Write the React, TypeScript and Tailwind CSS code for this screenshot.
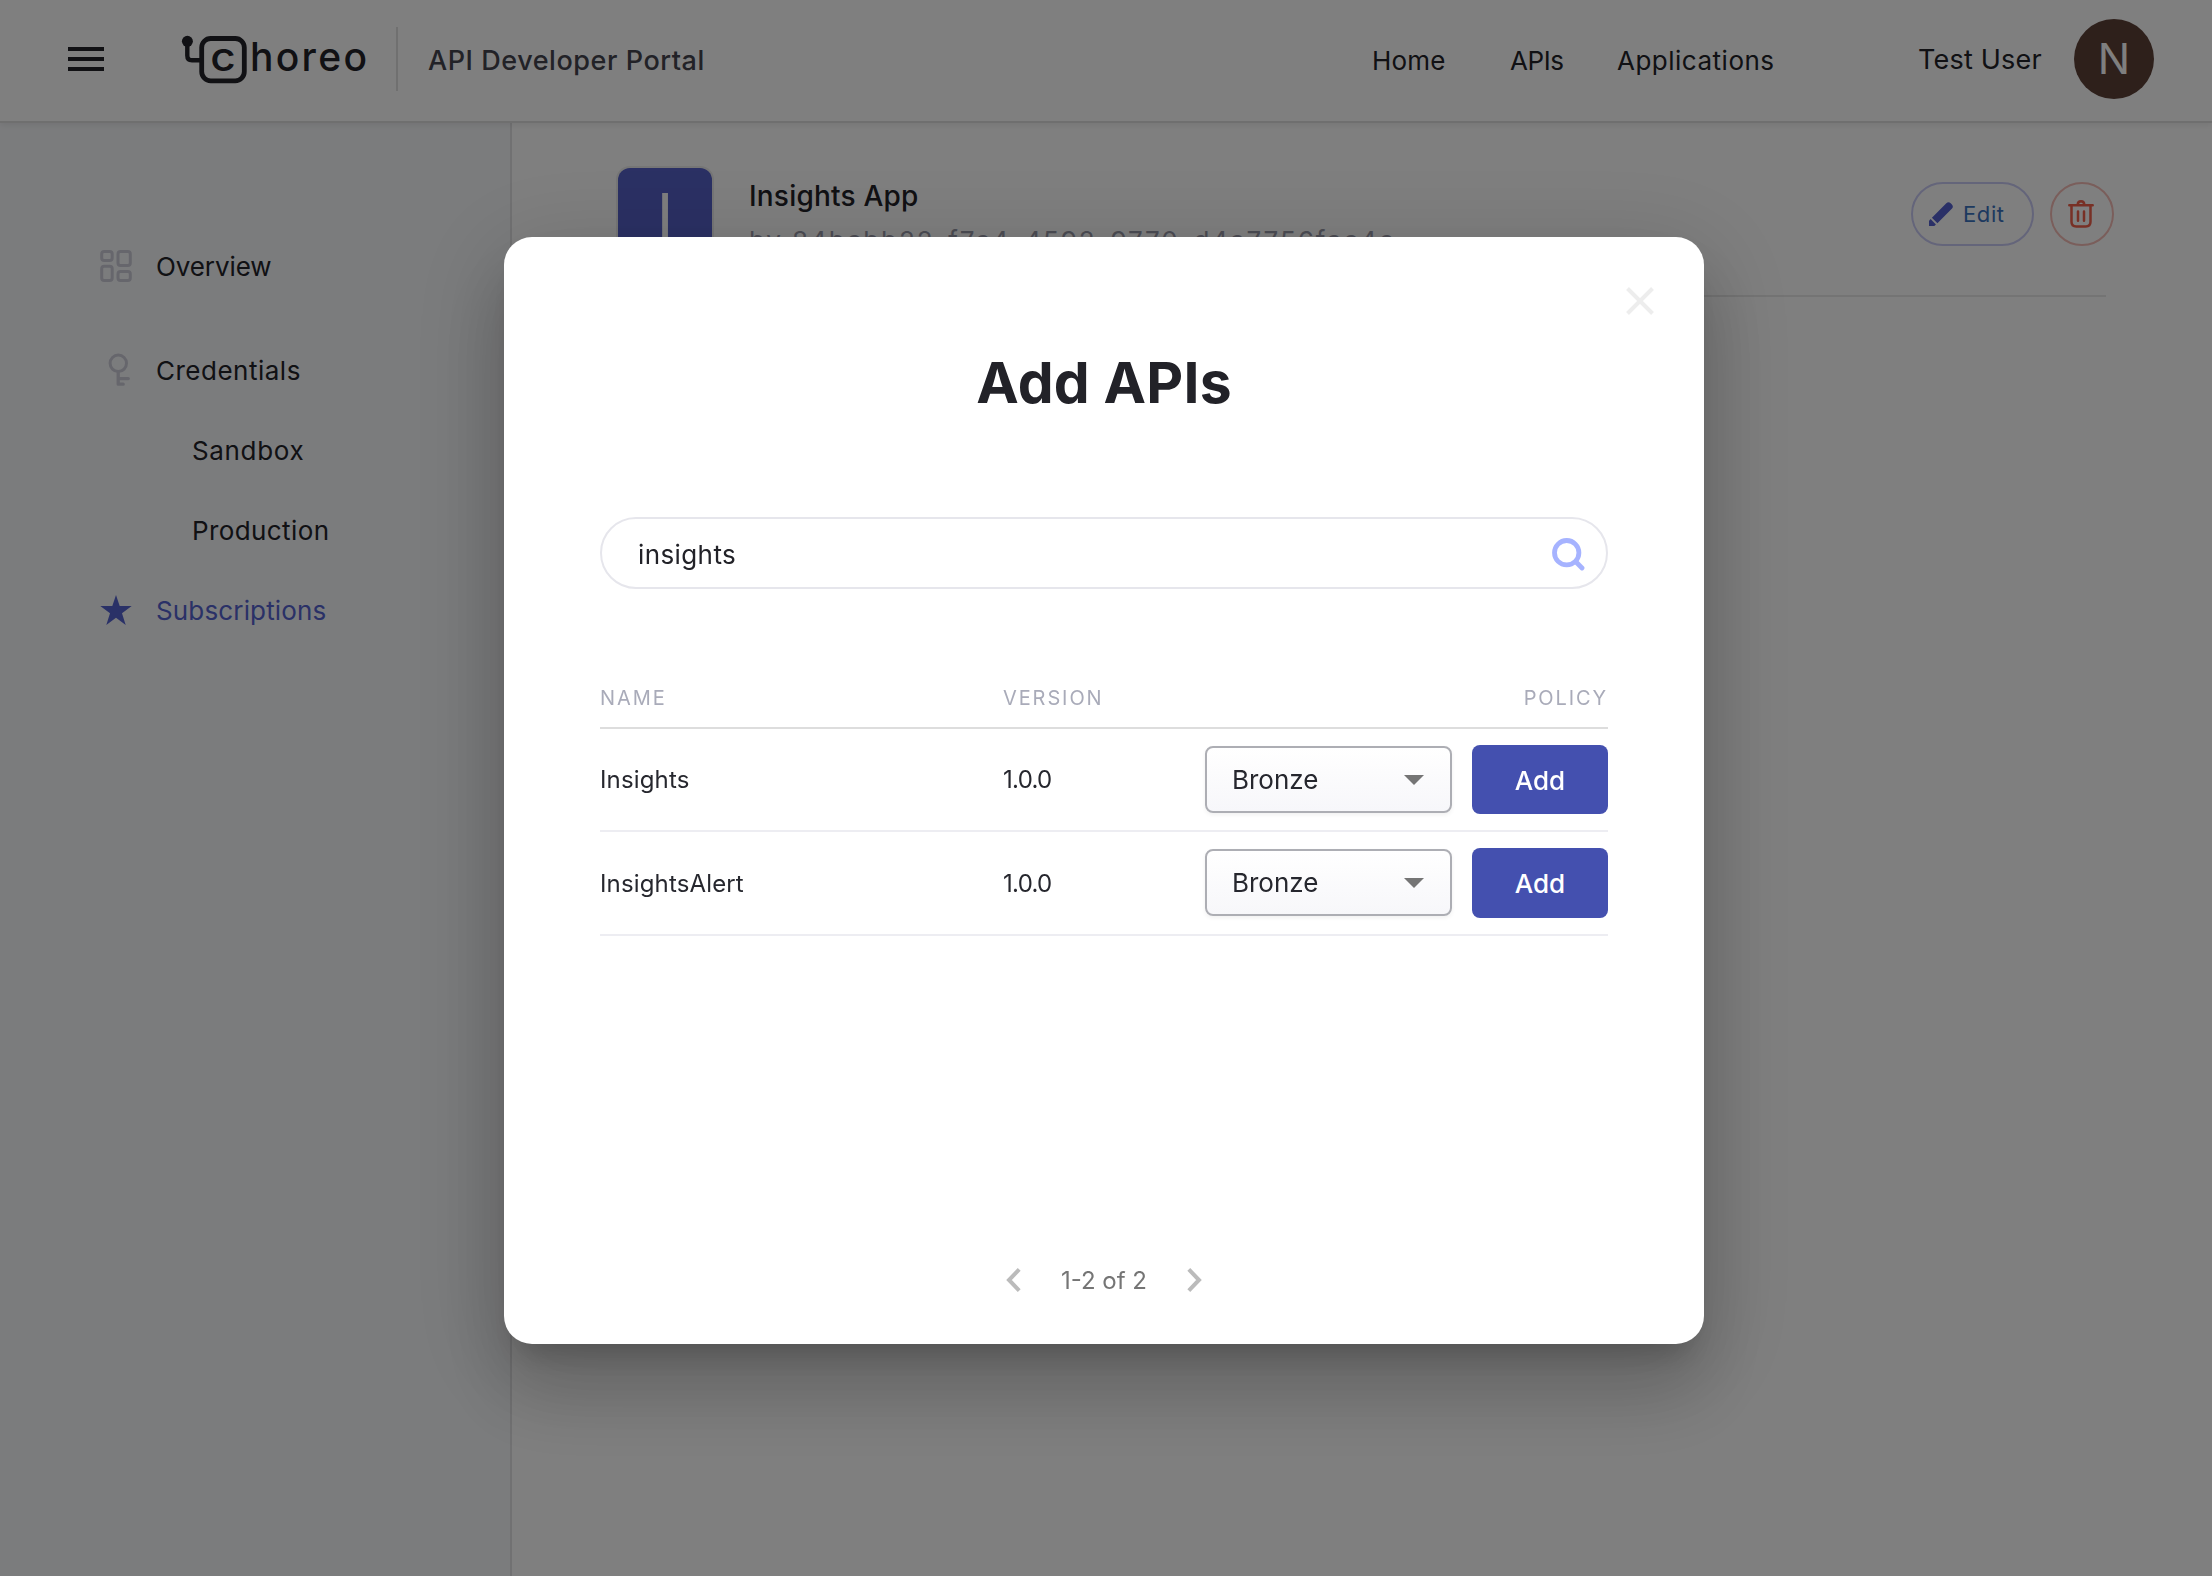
function MenuIcon() {
  return (
    <div className="flex w-9 flex-col gap-1.5">
      <div className="h-1 bg-[#222228]" />
      <div className="h-1 bg-[#222228]" />
      <div className="h-1 bg-[#222228]" />
    </div>
  );
}

function Logo() {
  return (
    <svg width="190" height="60" viewBox="180 30 190 60" fill="none" className="block">
      <circle cx="187.4" cy="40.3" r="5.5" fill="#222228" />
      <path d="M187.3 42V54.500Q187.300 59.300 192 59.300H201" stroke="#222228" strokeWidth="4.4" />
      <rect x="201.700" y="37.500" width="42.600" height="42.300" rx="9" stroke="#222228" strokeWidth="4.800" />
      <text x="210.200" y="69.800" fontFamily="Inter" fontSize="40" fontWeight="500" textLength="25.500" lengthAdjust="spacingAndGlyphs" fill="#222228">c</text>
      <text x="250" y="69.800" fontFamily="Inter" fontSize="39" fontWeight="500" letterSpacing="2.300" fill="#222228">horeo</text>
    </svg>
  );
}

function OverviewIcon() {
  return (
    <svg width="32" height="32" viewBox="0 0 32 32" fill="none" stroke="#cccdd8" strokeWidth="3">
      <rect x="1.700" y="1.500" width="10.500" height="9" rx="2.500" />
      <rect x="18" y="1.500" width="12.300" height="14" rx="2.500" />
      <rect x="1.700" y="16.200" width="10.500" height="14.300" rx="2.500" />
      <rect x="18" y="21.500" width="12.300" height="9" rx="2.500" />
    </svg>
  );
}

function KeyIcon() {
  return (
    <svg width="32" height="34" viewBox="0 0 32 34" fill="none" stroke="#cccdd8" strokeLinecap="round" strokeLinejoin="round">
      <circle cx="18.300" cy="10.300" r="8.200" strokeWidth="3" />
      <path d="M18.200 19.500V31.200H23.200M18.200 25.600H28.300" strokeWidth="3.300" />
    </svg>
  );
}

function StarIcon() {
  return (
    <svg width="32" height="32" viewBox="0 0 32 32" fill="#5563cf">
      <path d="M16 1L19.700 12.100H31.700L22 19.200L25.700 31L16 23.800L6.300 31L10 19.200L.3 12.100H12.300Z" />
    </svg>
  );
}

function PencilIcon() {
  return (
    <svg width="24" height="24" viewBox="0 0 24 24" fill="#5560cf" className="block">
      <path d="M2.900 15.700L17.300 1.300Q19.500-.7 21.700 1.300L22.700 2.300Q25 4.600 22.800 6.800L8.400 21.200Z" />
      <path d="M1.600 17.100L6.900 22.400L5.300 24H0V18.700Z" />
    </svg>
  );
}

function TrashIcon() {
  return (
    <svg width="26" height="28" viewBox="0 0 26 28" fill="none" stroke="#f0604a" strokeLinecap="round" strokeWidth="2.500" className="-ml-0.5 block">
      <path d="M1.300 5.300H24.700M9.700 5C9.700 0 16.300 0 16.300 5M3.500 5.500V21.800Q3.500 26.500 8.200 26.500H17.800Q22.500 26.500 22.500 21.800V5.500" />
      <path d="M10 11.500V20.800M16 11.500V20.800" />
    </svg>
  );
}

function SearchIcon() {
  return (
    <svg width="33" height="33" viewBox="0 0 33 33" fill="none" stroke="#a6b3ff" strokeWidth="4.800" strokeLinecap="round" className="mt-[3px]">
      <circle cx="14.700" cy="14.700" r="12.200" />
      <path d="M23.800 23.800L30 30" />
    </svg>
  );
}

function Chevron({ d }: { d: string }) {
  return (
    <svg width="15" height="24" viewBox="0 0 15 24" fill="none" stroke="#bbbbbb" strokeWidth="4">
      <path d={d} />
    </svg>
  );
}

function Row({ name, version, size }: { name: string; version: string; size: "first" | "second" }) {
  const first = size === "first";
  return (
    <div className={"flex items-center border-b-2 border-[#ededf2] text-[24px] text-[#26272e] " + (first ? "h-[103px]" : "h-[104px]")}>
      <div className={"w-[403px] tracking-[0.15px] " + (first ? "" : "pt-px")}>{name}</div>
      <div className={"w-[202px] tracking-[-0.7px] " + (first ? "" : "pt-px")}>{version}</div>
      <div className={"flex h-[67px] w-[247px] items-center justify-between rounded-lg border-2 border-[#adaeb4] bg-linear-to-b from-white to-[#f7f7fa] pl-[25px] pr-[26px] text-[26px] shadow-[0_2px_4px_rgba(0,0,0,0.06)] " + (first ? "" : "mb-px")}>
        <span>Bronze</span>
        <svg width="20" height="10" viewBox="0 0 20 10" fill="#757575" className="mt-px"><path d="M0 0H20L10 10Z" /></svg>
      </div>
      <div className={"ml-5 flex w-[136px] items-center justify-center rounded-lg bg-[#4450af] pt-px text-[26px] font-medium text-white " + (first ? "h-[69px]" : "h-[70px]")}>
        Add
      </div>
    </div>
  );
}

export default function App() {
  return (
    <div className="flex h-[1576px] w-[2212px] flex-col overflow-hidden bg-white font-['Inter',sans-serif] text-[26px] text-[#222228]">
      <header className="relative flex h-[123px] shrink-0 items-center border-b-2 border-[#dedede] pl-[68px] shadow-[0_2px_6px_rgba(0,0,0,0.08)]">
        <div className="w-28 pb-1"><MenuIcon /></div>
        <div className="w-[216px]"><Logo /></div>
        <div className="mb-1 h-16 w-0.5 bg-[#e0e0e0]" />
        <div className="w-[974px] pt-0.5 pl-[30px] text-[27px] font-medium tracking-[0.55px] text-[#44444e]">API Developer Portal</div>
        <nav className="flex pb-px">
          <div className="w-[138px] tracking-[0.2px]">Home</div>
          <div className="w-[107px] tracking-[-0.4px]">APIs</div>
          <div className="w-[301px] tracking-[0.5px]">Applications</div>
        </nav>
        <div className="w-[156px] text-[27px] tracking-[0.2px]">Test User</div>
        <div className="mb-1 flex size-20 items-center justify-center rounded-full bg-[#5d4037] text-[43px] text-white">N</div>
      </header>

      <div className="flex grow">
        <aside className="w-[512px] shrink-0 border-r-2 border-[#e2e2e4] bg-[#f7f8fb] pl-[100px] pt-[103px]">
          <div className="mb-6 flex h-20 items-center gap-6"><OverviewIcon /><span className="tracking-[-0.1px]">Overview</span></div>
          <div className="flex h-20 items-center gap-6"><KeyIcon /><span className="tracking-[0.5px]">Credentials</span></div>
          <div className="flex h-20 items-center pl-[92px] tracking-[0.65px]">Sandbox</div>
          <div className="flex h-20 items-center pl-[92px] tracking-[0.4px]">Production</div>
          <div className="flex h-20 items-center gap-6 text-[#5563cf]"><StarIcon /><span className="tracking-[0.15px]">Subscriptions</span></div>
        </aside>

        <main className="grow pl-[106px] pr-[106px] pt-[45px]">
          <div className="-mr-2 flex h-[127px] items-start">
            <div className="flex size-[94px] shrink-0 items-center justify-center rounded-xl bg-[#5661c8] text-[62px] text-white shadow-[0_0_0_2px_#ececec]">I</div>
            <div className="ml-[37px] grow pt-2.5">
              <div className="text-[28px] leading-9 font-medium tracking-[0.2px]">Insights App</div>
              <div className="mt-[9px] text-[26px] leading-9 tracking-[1.9px] whitespace-nowrap text-[#9899a8]">by 84bcbb22-f7c4-4592-9770-d4a7756fac4c</div>
            </div>
            <div className="mt-3.5 flex gap-4">
              <div className="flex h-16 w-[123px] items-center rounded-full border-2 border-[#c9caf5] pl-4">
                <PencilIcon />
                <span className="ml-2.5 text-[22px] tracking-[0.6px] text-[#3a72be]">Edit</span>
              </div>
              <div className="flex size-16 items-center justify-center rounded-full border-2 border-[#f5bcb6]"><TrashIcon /></div>
            </div>
          </div>
          <div className="h-0.5 bg-[#e8e8e8]" />
        </main>
      </div>

      <div className="fixed inset-0 bg-black/50 pt-[237px] pl-[504px]">
        <div className="flex h-[1107px] w-[1200px] flex-col rounded-[28px] bg-white px-24 pt-[50px] pb-11 shadow-[0_22px_30px_-14px_rgba(0,0,0,0.2),0_48px_76px_6px_rgba(0,0,0,0.14),0_18px_92px_16px_rgba(0,0,0,0.12)]">
          <div className="-mr-[46px] flex justify-end">
            <svg width="28" height="28" viewBox="0 0 28 28" stroke="#ededed" strokeWidth="4"><path d="M1.500 1.500L26.500 26.500M26.500 1.500L1.500 26.500" /></svg>
          </div>
          <h1 className="mt-8 text-center text-[57px] leading-[72px] font-bold tracking-[0.2px]">Add APIs</h1>
          <div className="mt-[98px] flex h-[72px] items-center justify-between rounded-full border-2 border-[#e6e6ec] pr-[21px] pl-9">
            <span className="pt-0.5 tracking-[0.4px]">insights</span>
            <SearchIcon />
          </div>
          <div className="mt-[79px] flex h-[61px] items-center border-b-2 border-[#dddddd] text-[20px] tracking-[1.9px] text-[#a9abb9]">
            <div className="w-[403px]">NAME</div>
            <div className="grow">VERSION</div>
            <div>POLICY</div>
          </div>
          <Row name="Insights" version="1.0.0" size="first" />
          <Row name="InsightsAlert" version="1.0.0" size="second" />
          <div className="mt-auto flex h-10 items-center justify-center text-[24px] text-[#757575]">
            <Chevron d="M13.200 1.400L3 12L13.200 22.600" />
            <div className="w-[166px] pt-0.5 text-center">1-2 of 2</div>
            <Chevron d="M1.800 1.400L12 12L1.800 22.600" />
          </div>
        </div>
      </div>
    </div>
  );
}
